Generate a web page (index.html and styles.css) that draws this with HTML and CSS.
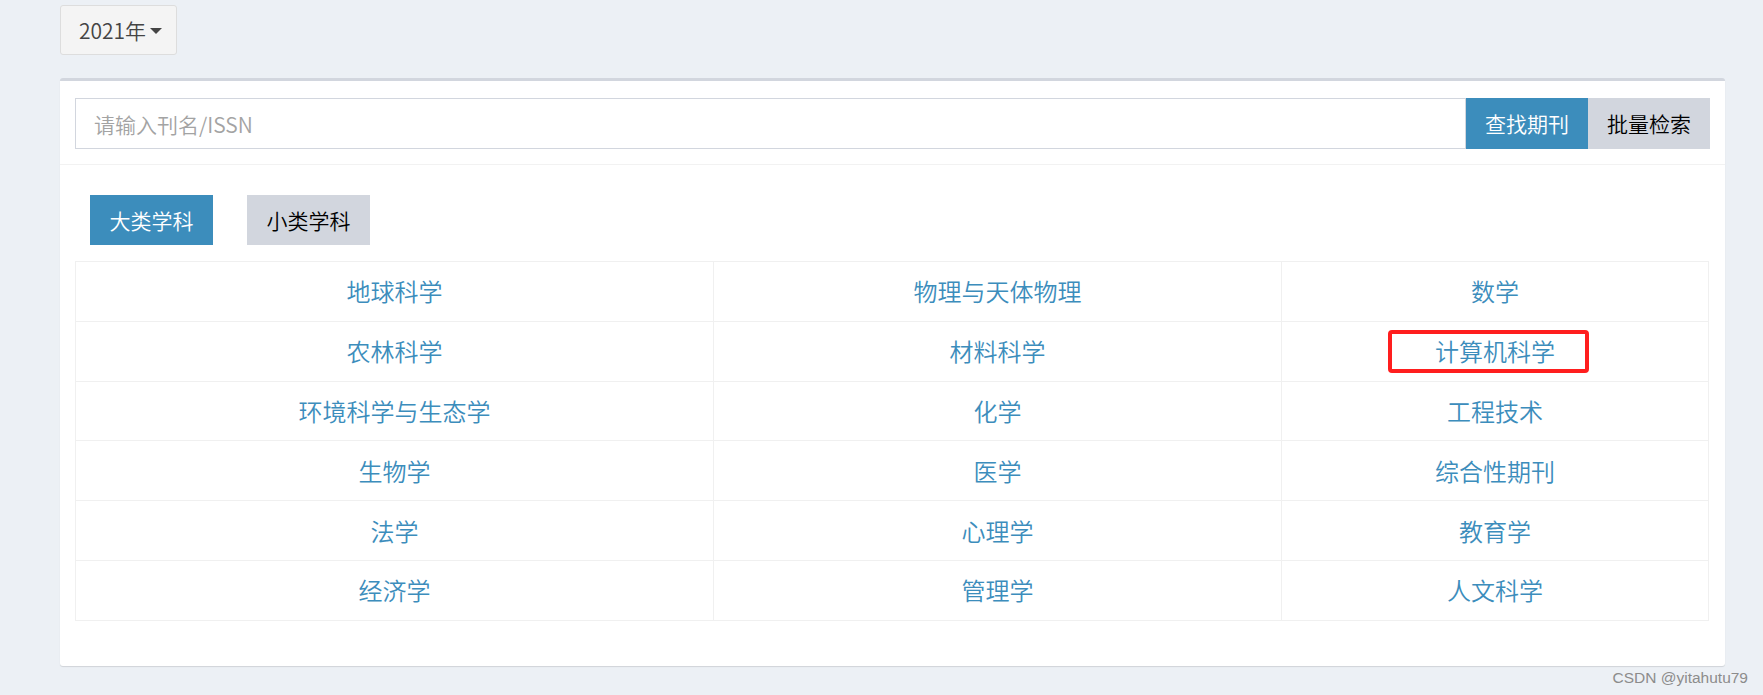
FILE: index.html
```html
<!DOCTYPE html>
<html lang="zh-CN">
<head>
<meta charset="utf-8">
<title>期刊检索</title>
<link rel="stylesheet" href="styles.css">
</head>
<body>
<div class="page">
  <div class="year-row">
    <button class="year-btn" type="button">2021年<span class="caret"></span></button>
  </div>
  <div class="box">
    <div class="box-header">
      <div class="search">
        <input class="search-input" type="text" placeholder="请输入刊名/ISSN">
        <button class="btn btn-primary" type="button">查找期刊</button>
        <button class="btn btn-default" type="button">批量检索</button>
      </div>
    </div>
    <div class="box-body">
      <div class="tabs">
        <button class="tab tab-active" type="button">大类学科</button>
        <button class="tab" type="button">小类学科</button>
      </div>
      <table class="subjects">
        <colgroup><col class="col-a"><col class="col-b"><col class="col-c"></colgroup>
        <tbody>
          <tr><td><a href="#">地球科学</a></td><td><a href="#">物理与天体物理</a></td><td><a href="#">数学</a></td></tr>
          <tr><td><a href="#">农林科学</a></td><td><a href="#">材料科学</a></td><td><a href="#" class="marked">计算机科学</a></td></tr>
          <tr><td><a href="#">环境科学与生态学</a></td><td><a href="#">化学</a></td><td><a href="#">工程技术</a></td></tr>
          <tr><td><a href="#">生物学</a></td><td><a href="#">医学</a></td><td><a href="#">综合性期刊</a></td></tr>
          <tr><td><a href="#">法学</a></td><td><a href="#">心理学</a></td><td><a href="#">教育学</a></td></tr>
          <tr><td><a href="#">经济学</a></td><td><a href="#">管理学</a></td><td><a href="#">人文科学</a></td></tr>
        </tbody>
      </table>
    </div>
  </div>
  <div class="watermark">CSDN @yitahutu79</div>
</div>
</body>
</html>
```
FILE: styles.css
```css
html, body {
  margin: 0;
  padding: 0;
  background: #ecf0f5;
}
body {
  font-family: "Noto Sans CJK SC", "Noto Sans", sans-serif;
  font-weight: 350;
  color: #333;
  width: 1763px;
  height: 695px;
  overflow: hidden;
  position: relative;
}
.page {
  padding: 5px 38px 0 60px;
}
.year-row {
  display: flex;
}
.year-btn {
  font: inherit;
  font-size: 21px;
  line-height: 30px;
  height: 50px;
  width: 117px;
  padding: 0 0 0 18px;
  background: #f4f4f4;
  border: 1px solid #ddd;
  border-radius: 3px;
  color: #444;
  display: flex;
  align-items: center;
  justify-content: flex-start;
}
.caret {
  display: inline-block;
  width: 0;
  height: 0;
  margin-left: 4px;
  margin-top: 2px;
  border-top: 6px solid #444;
  border-left: 6px solid transparent;
  border-right: 6px solid transparent;
}
.box {
  margin-top: 23px;
  background: #fff;
  border-top: 3px solid #d2d6de;
  border-radius: 3px;
  box-shadow: 0 1px 1px rgba(0, 0, 0, 0.12);
  height: 588px;
  box-sizing: border-box;
}
.box-header {
  padding: 17px 15px 15px 15px;
  border-bottom: 1px solid #f2f2f2;
}
.search {
  display: flex;
  height: 51px;
}
.search-input {
  flex: 1;
  font: inherit;
  font-size: 21px;
  color: #555;
  border: 1px solid #d2d6de;
  padding: 0 18px;
  margin: 0;
  outline: none;
  box-sizing: border-box;
  height: 51px;
}
.search-input::placeholder {
  color: #a3a3a3;
}
.btn {
  font: inherit;
  font-size: 21px;
  line-height: 51px;
  height: 51px;
  border: 0;
  margin: 0;
  padding: 0;
  width: 122px;
  text-align: center;
}
.btn-primary {
  background: #3c8dbc;
  color: #fff;
}
.btn-default {
  background: #d2d6de;
  color: #000;
}
.box-body {
  padding: 30px 15px 15px 15px;
}
.tabs {
  display: flex;
  gap: 34px;
  padding-left: 15px;
  margin-bottom: 16px;
}
.tab {
  font: inherit;
  font-size: 21px;
  height: 50px;
  line-height: 50px;
  width: 123px;
  padding: 0;
  border: 0;
  background: #d2d6de;
  color: #000;
  text-align: center;
}
.tab-active {
  background: #3c8dbc;
  color: #fff;
}
.subjects {
  width: 1634px;
  table-layout: fixed;
  border-collapse: collapse;
  border: 1px solid #f0f0f0;
}
.col-a { width: 638px; }
.col-b { width: 568px; }
.subjects td {
  border: 1px solid #f0f0f0;
  text-align: center;
  font-size: 24px;
  line-height: 34px;
  padding: 12.4px 8px 12.4px 8px;
}
.subjects a {
  color: #3c8dbc;
  text-decoration: none;
}
.marked {
  position: relative;
  display: inline-block;
}
.marked::after {
  content: "";
  position: absolute;
  left: -47px;
  right: -34px;
  top: -4px;
  bottom: -5px;
  border: 4.5px solid #ff1e1e;
  border-radius: 4px;
}
.watermark {
  position: absolute;
  right: 15px;
  top: 669px;
  font-family: "Liberation Sans", Arial, sans-serif;
  font-weight: 400;
  font-size: 15.5px;
  color: #8c8c8c;
}
```
